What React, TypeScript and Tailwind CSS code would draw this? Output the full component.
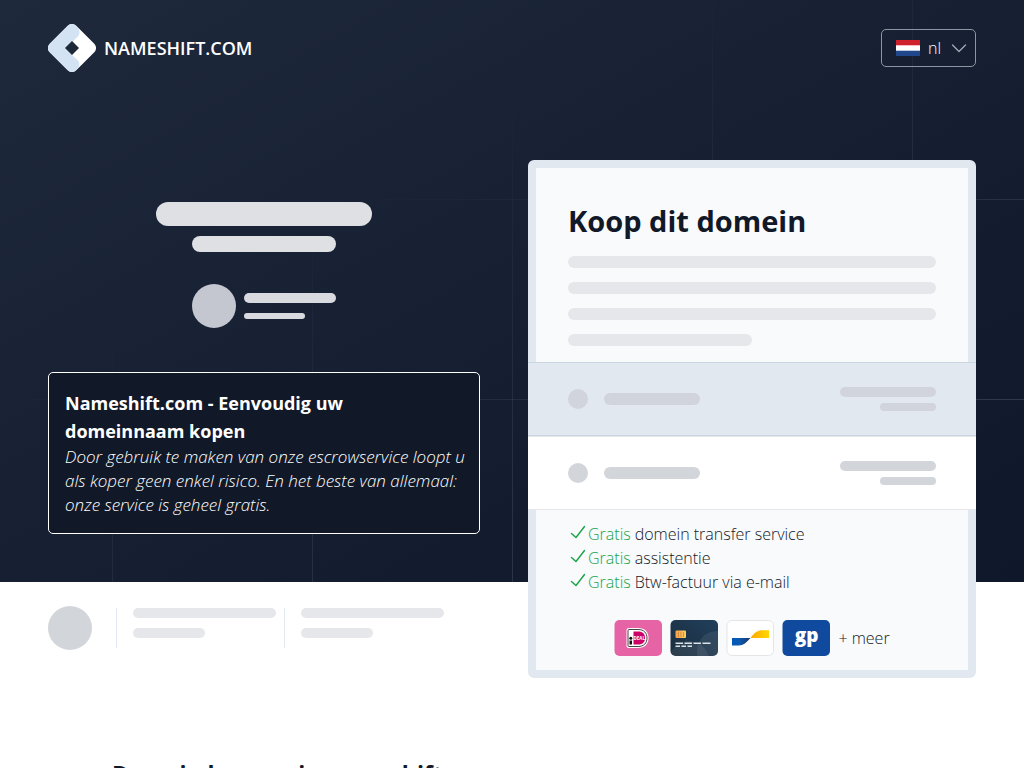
import { type ReactNode } from "react";
import clsx from "clsx";

const benefits = [
  "domein transfer service",
  "assistentie",
  "Btw-factuur via e-mail",
];

const Logo = () => (
  <svg className="size-12" viewBox="0 0 48 48" aria-hidden="true">
    <defs>
      <clipPath id="logo-shape">
        <rect
          x="5.25"
          y="5.25"
          width="37.5"
          height="37.5"
          rx="6"
          transform="rotate(45 24 24)"
        />
      </clipPath>
    </defs>
    <g clipPath="url(#logo-shape)">
      <path d="M0 0H48V48H0Z" fill="#fff" />
      <path
        d="M0 0H25L29 3C32 6 32.500 10 29.500 13L24 18V31L29 35.500C32 38 32 42 29 45L26 48H0Z"
        fill="#d3e3f4"
      />
      <path d="M24 17L31 24L24 31L17 24Z" fill="#1d2839" />
    </g>
  </svg>
);

const Flag = () => (
  <svg className="h-4 w-6" viewBox="0 0 24 16" aria-hidden="true">
    <path d="M0 0H24V16H0Z" fill="#fff" />
    <path d="M0 0H24V5.300H0Z" fill="#cf202b" />
    <path d="M0 10.700H24V16H0Z" fill="#20478b" />
  </svg>
);

const Check = () => (
  <svg
    className="h-6 w-5 shrink-0"
    viewBox="0 0 20 24"
    fill="none"
    stroke="currentColor"
    strokeWidth="1.4"
    strokeLinecap="round"
    strokeLinejoin="round"
    aria-hidden="true"
  >
    <path d="M3.500 11.500L8 15.500L16.500 4.500" />
  </svg>
);

const Ideal = () => (
  <svg className="h-9 w-12" viewBox="0 0 48 36" role="img" aria-label="iDEAL">
    <rect x=".5" width="47.500" height="36" rx="5" fill="#e664a5" />
    <path
      d="M14.500 8H24C31 8 34.500 12 34.500 18C34.500 24 31 28 24 28H14.500C13.500 28 12.500 27 12.500 26V10C12.500 9 13.500 8 14.500 8Z"
      fill="#fff"
    />
    <path
      d="M15 9.500H24C30 9.500 33 13 33 18C33 23 30 26.500 24 26.500H15C14.500 26.500 14 26 14 25.500V10.500C14 10 14.500 9.500 15 9.500Z"
      fill="none"
      stroke="#111"
      strokeWidth=".8"
    />
    <path
      d="M19.500 11.500H24C29 11.500 31 14 31 18C31 22 29 24.500 24 24.500H19.500Z"
      fill="#cc0066"
    />
    <circle cx="16.800" cy="18.300" r="1.500" fill="#111" />
    <path d="M15.500 20.500H18V24.500H15.500Z" fill="#111" />
    <text
      x="19.500"
      y="20"
      fontSize="4.500"
      fontWeight="700"
      fill="#fff"
      fontFamily="Open Sans, sans-serif"
    >
      DEAL
    </text>
  </svg>
);

const CreditCard = () => (
  <svg
    className="h-9 w-12"
    viewBox="0 0 48 36"
    role="img"
    aria-label="Creditcard"
  >
    <defs>
      <linearGradient id="card-bg" x1="0" y1="1" x2="1" y2="0">
        <stop stopColor="#1b2d3d" />
        <stop offset="1" stopColor="#213f5c" />
      </linearGradient>
      <linearGradient id="card-chip">
        <stop stopColor="#f5a04a" />
        <stop offset="1" stopColor="#ffcf62" />
      </linearGradient>
      <clipPath id="card-shape">
        <rect x=".5" width="47.500" height="36" rx="5" />
      </clipPath>
    </defs>
    <g clipPath="url(#card-shape)">
      <path d="M0 0H48V36H0Z" fill="url(#card-bg)" />
      <circle cx="47" cy="31" r="20" fill="#fff" opacity=".08" />
      <circle cx="19" cy="41" r="20" fill="#fff" opacity=".08" />
    </g>
    <rect x="5.500" y="10.500" width="10.500" height="7.500" rx="1" fill="url(#card-chip)" />
    <path
      d="M8.500 12V17M11 12V17M13.500 12V17"
      stroke="#c77832"
      strokeWidth=".7"
    />
    <path
      d="M5.500 23.300H13M14.500 23.300H22M23.500 23.300H31M32.500 23.300H40.500M5.500 26.200H10M11.500 26.200H16M17.500 26.200H22"
      stroke="#dbe2e7"
      strokeWidth="1.500"
    />
  </svg>
);

const Bancontact = () => (
  <svg
    className="h-9 w-12"
    viewBox="0 0 48 36"
    role="img"
    aria-label="Bancontact"
  >
    <defs>
      <linearGradient id="bc-blue">
        <stop stopColor="#005ab9" />
        <stop offset=".4" stopColor="#0a58b0" />
        <stop offset="1" stopColor="#1e3764" />
      </linearGradient>
      <linearGradient id="bc-yellow">
        <stop stopColor="#ffa800" />
        <stop offset="1" stopColor="#ffd800" />
      </linearGradient>
    </defs>
    <rect x="1" y=".5" width="46.500" height="35" rx="5" fill="#fff" stroke="#e5e5e5" />
    <path d="M6 18H24.500C20.500 22.500 17.500 25.500 12.500 25.500H6Z" fill="url(#bc-blue)" />
    <path d="M24.500 18C28.500 12.500 31.500 10.300 36.500 10.300H43V18Z" fill="url(#bc-yellow)" />
  </svg>
);

const GiroPay = () => (
  <svg className="h-9 w-12" viewBox="0 0 48 36" role="img" aria-label="Giropay">
    <rect x=".5" width="47.500" height="36" rx="5" fill="#104a9e" />
    <text
      x="24.500"
      y="22"
      textAnchor="middle"
      fontSize="19"
      fontWeight="800"
      fill="#fff"
      fontFamily="Open Sans, sans-serif"
    >
      gp
    </text>
  </svg>
);

const OptionRow = ({ selected }: { selected?: boolean }) => {
  const bar = selected ? "bg-[#d1d4dc]" : "bg-[#d2d5da]";

  return (
    <div
      className={clsx(
        "-mx-2 flex items-center gap-4 border-y px-10 py-6",
        selected
          ? "border-[#cbd5e1] bg-[#e2e8f0]"
          : "border-[#e5e7eb] bg-white"
      )}
    >
      <div className={clsx("size-5 rounded-full", bar)} />
      <div className={clsx("h-3 w-24 rounded-full", bar)} />
      <div className="ml-auto flex flex-col items-end gap-1.5">
        <div className={clsx("h-2.5 w-24 rounded-full", bar)} />
        <div className={clsx("h-2 w-14 rounded-full", bar)} />
      </div>
    </div>
  );
};

const Columns = ({ left, right }: { left: ReactNode; right?: ReactNode }) => (
  <div className="relative grid grid-cols-2 gap-8 px-12">
    <div className="pr-4">{left}</div>
    <div>{right}</div>
  </div>
);

const Header = () => (
  <header className="relative flex items-center justify-between px-12 py-6">
    <a href="/" className="flex items-center gap-2 text-lg font-semibold text-white">
      <Logo />
      NAMESHIFT.COM
    </a>
    <div className="flex h-[38px] items-center gap-2 rounded-[5px] border border-[#8d95a2] pr-2 pl-3.5 text-white">
      <Flag />
      <select
        aria-label="Taal"
        defaultValue="nl"
        className="appearance-none bg-transparent font-light [field-sizing:content]"
      >
        <option value="nl">nl</option>
        <option value="en">en</option>
        <option value="de">de</option>
      </select>
      <svg
        className="h-4 w-[18px]"
        viewBox="0 0 18 16"
        fill="none"
        stroke="#a3a9b4"
        strokeWidth="1.300"
        strokeLinecap="round"
        strokeLinejoin="round"
        aria-hidden="true"
      >
        <path d="M3.500 5L10 11.500L16.500 5" />
      </svg>
    </div>
  </header>
);

const Intro = () => (
  <div className="flex h-full flex-col items-center pt-[42px]">
    <div className="h-6 w-1/2 rounded-full bg-[#dfe0e4]" />
    <div className="mt-2.5 h-4 w-1/3 rounded-full bg-[#dfe0e4]" />
    <div className="mt-8 flex w-1/3 items-center gap-2">
      <div className="size-11 shrink-0 rounded-full bg-[#c4c7cf]" />
      <div className="flex flex-1 flex-col gap-2.5">
        <div className="h-2.5 rounded-full bg-[#d9dae0]" />
        <div className="h-1.5 w-2/3 rounded-full bg-[#d9dae0]" />
      </div>
    </div>
    <article className="mt-11 w-full rounded-[5px] border border-white bg-[#111827] py-4 pr-3 pl-4 text-white">
      <h2 className="text-lg leading-7 font-bold">
        Nameshift.com - Eenvoudig uw domeinnaam kopen
      </h2>
      <p className="text-[17px] leading-6 font-light italic">
        Door gebruik te maken van onze escrowservice loopt u als koper geen
        enkel risico. En het beste van allemaal: onze service is geheel gratis.
      </p>
    </article>
  </div>
);

const BuyCard = () => (
  <section className="-mb-24 rounded-md border-8 border-[#e2e8f0] bg-[#f9fafc] text-[#111827]">
    <div className="px-8 pt-8 pb-4">
      <h1 className="text-[29px] leading-[42px] font-bold">Koop dit domein</h1>
      <div className="mt-3.5 flex flex-col gap-3.5">
        <div className="h-3 rounded-full bg-[#e6e7eb]" />
        <div className="h-3 rounded-full bg-[#e6e7eb]" />
        <div className="h-3 rounded-full bg-[#e6e7eb]" />
        <div className="h-3 w-1/2 rounded-full bg-[#e6e7eb]" />
      </div>
    </div>
    <OptionRow selected />
    <OptionRow />
    <ul className="px-8 pt-3 font-light">
      {benefits.map((benefit) => (
        <li key={benefit} className="flex leading-6">
          <span className="flex text-[#16a34a]">
            <Check />
            Gratis
          </span>
          <span className="pl-1">{benefit}</span>
        </li>
      ))}
    </ul>
    <div className="flex items-center justify-center gap-2 pt-6.5 pb-3.5 font-light">
      <Ideal />
      <CreditCard />
      <Bancontact />
      <GiroPay />
      <span>+ meer</span>
    </div>
  </section>
);

const TrustItem = () => (
  <div className="flex h-10 flex-1 flex-col gap-2.5 border-l border-[#e2e8f0] pr-2 pl-4">
    <div className="h-2.5 rounded-full bg-[#e6e7eb]" />
    <div className="h-2.5 w-1/2 rounded-full bg-[#e6e7eb]" />
  </div>
);

const App = () => {
  return (
    <div className="bg-white font-['Open_Sans',sans-serif] text-base">
      <div className="relative bg-linear-to-br from-[#1e293b] to-[#0f172a]">
        {/* grid lines, fading out towards the top left */}
        <div className="absolute inset-0 bg-[linear-gradient(to_right,#ffffff2c_1px,transparent_1px),linear-gradient(to_bottom,#ffffff2c_1px,transparent_1px)] mask-[linear-gradient(to_bottom_right,transparent_32%,black)] bg-size-[200px_200px] bg-position-[calc(50%_+_100px)_-1px]" />
        <Header />
        <div className="pt-16">
          <Columns left={<Intro />} right={<BuyCard />} />
        </div>
      </div>

      <div className="pt-6">
        <Columns
          left={
            <div className="flex items-center pr-7">
              <div className="mr-6 size-11 rounded-full bg-[#d2d5da]" />
              <TrustItem />
              <TrustItem />
            </div>
          }
        />
      </div>

      <section className="px-28 pt-27">
        <h2 className="text-[23px] leading-8 font-bold text-[#111827]">
          Domein kopen via nameshift
        </h2>
      </section>
    </div>
  );
};

export default App;
